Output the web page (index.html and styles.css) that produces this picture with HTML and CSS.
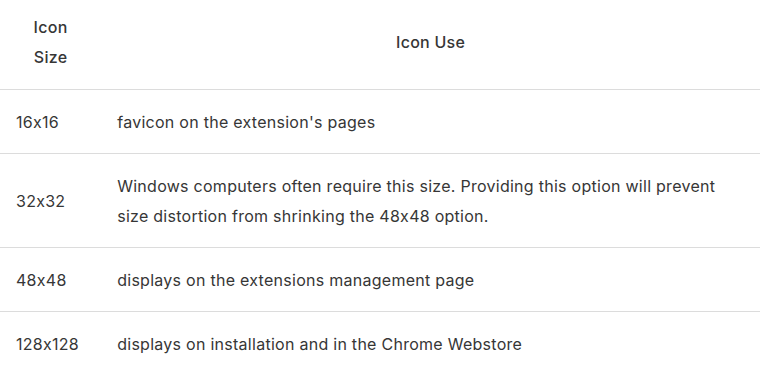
FILE: index.html
```html
<!DOCTYPE html>
<html lang="en">
<head>
<meta charset="utf-8">
<title>Icon sizes</title>
<link rel="stylesheet" href="styles.css">
</head>
<body>
<table class="icons">
  <thead>
    <tr><th class="size">Icon Size</th><th>Icon Use</th></tr>
  </thead>
  <tbody>
    <tr><td>16x16</td><td>favicon on the extension's pages</td></tr>
    <tr><td>32x32</td><td>Windows computers often require this size. Providing this option will prevent size distortion from shrinking the 48x48 option.</td></tr>
    <tr><td>48x48</td><td>displays on the extensions management page</td></tr>
    <tr><td>128x128</td><td>displays on installation and in the Chrome Webstore</td></tr>
  </tbody>
</table>
</body>
</html>
```
FILE: styles.css
```css
html, body {
  margin: 0;
  padding: 0;
  background: #fff;
}
body {
  font-family: Inter, "Noto Sans", "Liberation Sans", sans-serif;
  font-size: 16px;
  line-height: 30px;
  letter-spacing: 0.27px;
  font-feature-settings: "calt" 0;
  color: #363636;
}
.icons {
  width: 760px;
  border-collapse: collapse;
}
.icons th {
  font-weight: 500;
  text-align: center;
  vertical-align: middle;
  padding: 12px 16px 17px 16px;
}
.icons td {
  text-align: left;
  vertical-align: middle;
  padding: 16.5px 18px 16.5px 16px;
  border-top: 1px solid #dcdcdc;
}
.icons td:first-child {
  white-space: nowrap;
}
```
